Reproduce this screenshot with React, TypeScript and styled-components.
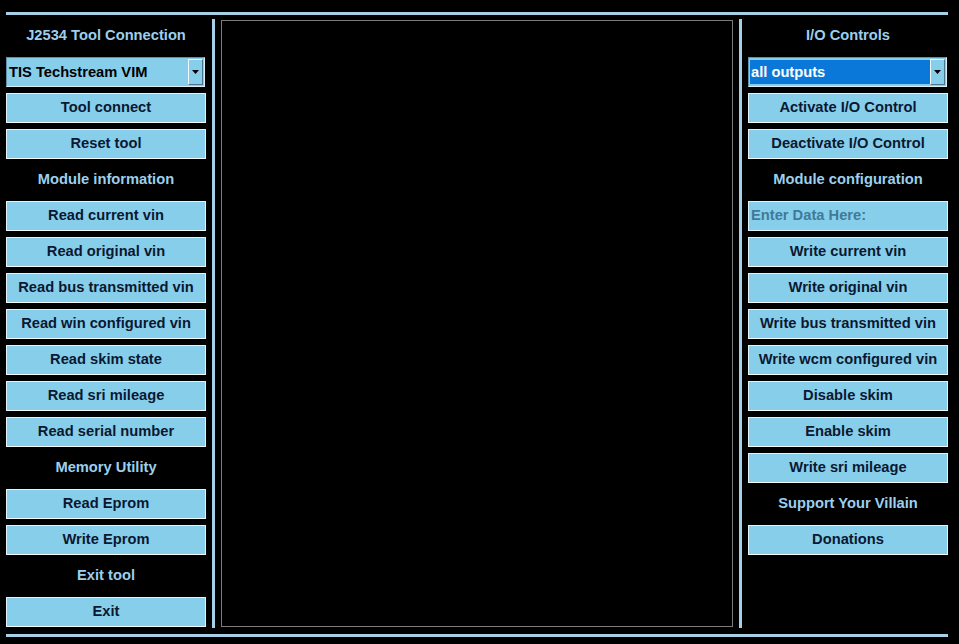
import React from "react";
import styled, { createGlobalStyle } from "styled-components";

const GlobalStyle = createGlobalStyle`
    html, body {
        margin: 0;
        padding: 0;
        background-color: #000;
    }
    body {
        font-family: "Liberation Sans", Arial, sans-serif;
    }
`;

const SKY = "#87ceeb";
const LINE = "#a6d0e8";

export const WINDOW = styled.div`
    width: 959px;
    height: 644px;
    background-color: #000;
    padding-top: 12px;
    box-sizing: border-box;
    overflow: hidden;
`;
WINDOW.displayName = "WINDOW";

export const RULE = styled.div`
    margin-left: 6px;
    width: 942px;
    height: 3px;
    background-color: ${LINE};
`;
RULE.displayName = "RULE";

export const BODY = styled.div`
    display: grid;
    grid-template-columns: 200px 3px 512px 3px 200px;
    column-gap: 6px;
    height: 619px;
    padding: 4px 0 0 6px;
    box-sizing: border-box;
`;
BODY.displayName = "BODY";

export const DIVIDER = styled.div`
    width: 3px;
    height: 609px;
    background-color: ${LINE};
`;
DIVIDER.displayName = "DIVIDER";

export const OUTPUT = styled.div`
    margin-top: 1px;
    height: 607px;
    border: 1px solid #7c7c7c;
    box-sizing: border-box;
    background-color: #000;
`;
OUTPUT.displayName = "OUTPUT";

export const COLUMN = styled.div`
    display: grid;
    grid-template-rows: repeat(17, 30px);
    row-gap: 6px;
    padding-top: 2px;
`;
COLUMN.displayName = "COLUMN";

export const HEADING = styled.div`
    display: flex;
    align-items: center;
    justify-content: center;
    padding-bottom: 2px;
    color: #9ccfec;
    font-size: 14.7px;
    font-weight: 700;
`;
HEADING.displayName = "HEADING";

export const BUTTON = styled.button`
    display: flex;
    align-items: center;
    justify-content: center;
    margin: 0;
    padding: 0 0 2px;
    height: 30px;
    width: 200px;
    background-color: ${SKY};
    border: 1px solid #e4f3fb;
    border-bottom-color: #f2f9fd;
    color: #0b1830;
    font-family: "Liberation Sans", Arial, sans-serif;
    font-size: 14.7px;
    font-weight: 700;
    cursor: pointer;
`;
BUTTON.displayName = "BUTTON";

interface ICombo {
    selected?: boolean;
}

export const COMBO = styled.div<ICombo>`
    display: flex;
    align-items: stretch;
    height: 30px;
    width: 199px;
    box-sizing: border-box;
    background-color: ${SKY};
    border: 1px solid #5f8fab;
    border-right-color: #d8eef9;
    border-bottom-color: #d8eef9;
    .value{
        flex: 1;
        display: flex;
        align-items: center;
        margin: 2px 0 2px 1px;
        padding: 0 0 1px 1px;
        font-size: 14.7px;
        font-weight: 700;
        color: ${props => props.selected ? "#fff" : "#000"};
        background-color: ${props => props.selected ? "#0a78d8" : "transparent"};
    }
`;
COMBO.displayName = "COMBO";

export const ARROW = styled.div`
    display: flex;
    align-items: center;
    justify-content: center;
    width: 15px;
    margin: 1px 1px 1px 0;
    background-color: ${SKY};
    border-left: 1px solid #f0f8fd;
    border-top: 1px solid #f0f8fd;
    border-right: 1px solid #4b7690;
    border-bottom: 1px solid #4b7690;
    box-sizing: border-box;
    svg{
        display: block;
    }
`;
ARROW.displayName = "ARROW";

export const DATA_INPUT = styled.input`
    -webkit-appearance: none;
    appearance: none;
    margin: 0;
    height: 30px;
    width: 200px;
    box-sizing: border-box;
    padding: 0 0 2px 2px;
    background-color: ${SKY};
    border: 1px solid #e4f3fb;
    outline: none;
    font-family: "Liberation Sans", Arial, sans-serif;
    font-size: 14.7px;
    font-weight: 700;
    color: #0b1830;
    &::placeholder{
        color: #3f7a98;
        opacity: 1;
    }
`;
DATA_INPUT.displayName = "DATA_INPUT";

const Combo = ({ value, selected }: { value: string; selected?: boolean }) => (
    <COMBO selected={selected}>
        <span className="value">{value}</span>
        <ARROW>
            <svg width="7" height="4" viewBox="0 0 7 4">
                <path d="M0 0 L7 0 L3.5 4 Z" fill="#000" />
            </svg>
        </ARROW>
    </COMBO>
);

const leftItems: Array<[string, string]> = [
    ["h", "J2534 Tool Connection"],
    ["c", "TIS Techstream VIM"],
    ["b", "Tool connect"],
    ["b", "Reset tool"],
    ["h", "Module information"],
    ["b", "Read current vin"],
    ["b", "Read original vin"],
    ["b", "Read bus transmitted vin"],
    ["b", "Read win configured vin"],
    ["b", "Read skim state"],
    ["b", "Read sri mileage"],
    ["b", "Read serial number"],
    ["h", "Memory Utility"],
    ["b", "Read Eprom"],
    ["b", "Write Eprom"],
    ["h", "Exit tool"],
    ["b", "Exit"],
];

const rightItems: Array<[string, string]> = [
    ["h", "I/O Controls"],
    ["s", "all outputs"],
    ["b", "Activate I/O Control"],
    ["b", "Deactivate I/O Control"],
    ["h", "Module configuration"],
    ["i", "Enter Data Here:"],
    ["b", "Write current vin"],
    ["b", "Write original vin"],
    ["b", "Write bus transmitted vin"],
    ["b", "Write wcm configured vin"],
    ["b", "Disable skim"],
    ["b", "Enable skim"],
    ["b", "Write sri mileage"],
    ["h", "Support Your Villain"],
    ["b", "Donations"],
];

const renderItem = ([kind, label]: [string, string], i: number) => {
    switch (kind) {
        case "h":
            return <HEADING key={i}>{label}</HEADING>;
        case "c":
            return <Combo key={i} value={label} />;
        case "s":
            return <Combo key={i} value={label} selected />;
        case "i":
            return <DATA_INPUT key={i} placeholder={label} />;
        default:
            return <BUTTON key={i}>{label}</BUTTON>;
    }
};

export default function App() {
    return (
        <>
            <GlobalStyle />
            <WINDOW>
                <RULE />
                <BODY>
                    <COLUMN>{leftItems.map(renderItem)}</COLUMN>
                    <DIVIDER />
                    <OUTPUT />
                    <DIVIDER />
                    <COLUMN>{rightItems.map(renderItem)}</COLUMN>
                </BODY>
                <RULE />
            </WINDOW>
        </>
    );
}
